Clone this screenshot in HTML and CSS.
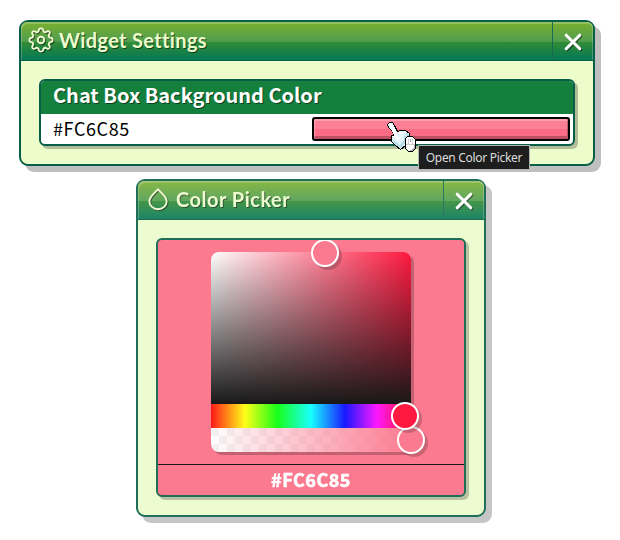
FILE: index.html
```html
<!DOCTYPE html>
<html lang="en">
<head>
<meta charset="utf-8">
<title>Widget Settings</title>
<link rel="stylesheet" href="styles.css">
</head>
<body>
<section class="window settings">
  <header class="titlebar">
    <svg class="title-icon" viewBox="0 0 24 24"><path d="M10.200 2.200C10.800 1 13.200 1 13.800 2.200L14.500 4.300 16 4.900 18 3.900C19.300 3.500 20.500 4.700 20.100 6L19.100 8 19.700 9.500 21.800 10.200C23 10.800 23 13.200 21.800 13.800L19.700 14.500 19.100 16 20.100 18C20.500 19.300 19.300 20.500 18 20.100L16 19.100 14.500 19.700 13.800 21.800C13.200 23 10.800 23 10.200 21.800L9.500 19.700 8 19.100 6 20.100C4.700 20.500 3.500 19.300 3.900 18L4.900 16 4.300 14.500 2.200 13.800C1 13.200 1 10.800 2.200 10.200L4.300 9.500 4.900 8 3.900 6C3.500 4.700 4.700 3.500 6 3.900L8 4.900 9.500 4.300z"/><circle cx="12" cy="12" r="3"/></svg>
    <h1 class="title">Widget Settings</h1>
    <button class="close" aria-label="Close"><svg viewBox="0 0 16 16"><path d="M2 2l12 12M14 2L2 14"/></svg></button>
  </header>
  <div class="window-body">
    <div class="panel field">
      <h2 class="field-title">Chat Box Background Color</h2>
      <div class="field-row"><span class="field-value">#FC6C85</span><button class="swatch" aria-label="Open Color Picker"></button></div>
    </div>
  </div>
</section>

<section class="window picker">
  <header class="titlebar">
    <svg class="title-icon drop" viewBox="0 0 24 24"><path d="M12 3c2 2.400 8 6.500 8 11a8 7.500 0 0 1-16 0c0-4.500 6-8.600 8-11z"/></svg>
    <h1 class="title picker-title">Color Picker</h1>
    <button class="close" aria-label="Close"><svg viewBox="0 0 16 16"><path d="M2 2l12 12M14 2L2 14"/></svg></button>
  </header>
  <div class="window-body">
    <div class="panel picker-panel">
      <div class="picker-area">
        <div class="color-control">
          <div class="saturation"></div>
          <div class="hue"></div>
          <div class="alpha"></div>
          <i class="knob knob-saturation"></i>
          <i class="knob knob-alpha"></i>
          <i class="knob knob-hue"></i>
        </div>
      </div>
      <div class="hex">#FC6C85</div>
    </div>
  </div>
</section>

<div class="tooltip">Open Color Picker</div>
<svg class="cursor" viewBox="0 0 30 32" shape-rendering="crispEdges">
  <path fill="#e4f5fa" stroke="#000" d="M.500 2.500L2.500.500H5.500L7.500 3.500 10.500 9.500 13.500 8.500H18.500L22.500 11.500 23.500 16.500V23.500H18.500L13.500 27.500 8.500 23.500 4.500 19.500V13.500H7.500L4.500 8.500 1.500 5.500z"/>
  <path fill="#b8dce6" d="M19 11h2l2 4v6h-5l-4 5-3-2 3-2 3-4v-4h2zM6 18l3 2 3 2v2H9l-3-4z"/>
  <path fill="#fff" d="M2 2h3l4 7 1 5 3 2-2 3-3-3-1-3-3-7zM12 10h4v2h-4z"/>
  <path fill="#fff" stroke="#000" d="M18.500 16.500L20.500 14.500H25.500L28.500 17.500V26.500L25.500 29.500H21.500L18.500 26.500z"/>
  <path fill="none" stroke="#cfccd2" d="M19 22.500h9M21.500 17v5M25.500 17v5"/>
  <path fill="none" stroke="#aaa4ae" d="M23.500 17v3M27.500 23v3l-2 2h-3"/>
</svg>
</body>
</html>
```
FILE: styles.css
```css
* { box-sizing: border-box; }
body { margin: 0; padding: 20px 0 0 19px; width: 620px; height: 540px; overflow: hidden; background: #fff; font-family: "Noto Sans CJK JP", "Noto Sans", sans-serif; }
h1, h2 { margin: 0; }
button { padding: 0; }
.window { border: 2px solid #065f46; border-radius: 9px; background: #ecfccb; box-shadow: 6px 6px 0 rgba(0,0,0,.25); }
.settings { width: 576px; height: 146px; }
.picker { width: 350px; height: 338px; margin: 13px 0 0 117px; opacity: .9; }
.titlebar { height: 39px; display: flex; align-items: center; padding-left: 7px; border-bottom: 1px solid #065f46; border-radius: 6px 6px 0 0; box-shadow: inset 1px 2px 0 rgba(255,255,255,.22), inset -1px 0 0 rgba(255,255,255,.22); background: linear-gradient(rgba(255,255,255,.14), rgba(255,255,255,.14)) 0 0 / 100% 20px no-repeat, linear-gradient(#65a30d, #047857); }
.title-icon { width: 26px; height: 26px; margin-top: -2px; flex: none; fill: none; stroke: #f1fbd0; stroke-width: 1.7; stroke-linejoin: round; filter: drop-shadow(1px 1px 0 rgba(0,0,0,.5)); }
.drop { width: 26px; height: 26px; }
.title { margin-left: 5px; flex: 1; white-space: nowrap; color: #ecfccb; font: 700 20px/36px Lato, sans-serif; letter-spacing: .35px; padding-bottom: 2px; text-shadow: 1px 1px 0 rgba(0,0,0,.5); }
.picker-title { letter-spacing: .5px; }
.close { width: 41px; height: 38px; display: flex; align-items: center; justify-content: center; border: 0; border-left: 1px solid #166b50; background: none; }
.close svg { width: 18px; height: 18px; margin-top: 1px; fill: none; stroke: #fff; stroke-width: 2.8; stroke-linecap: round; filter: drop-shadow(1px 1px 0 rgba(0,0,0,.5)); }
.window-body { padding: 18px; }
.panel { border: 2px solid #065f46; border-radius: 6px; box-shadow: 3px 3px 0 rgba(0,0,0,.25); }
.field { height: 67px; background: #fff; }
.field-title { height: 33px; padding-left: 12px; border-radius: 4px 4px 0 0; background: #15803d; color: #fff; font-size: 20px; font-weight: 700; line-height: 28px; white-space: nowrap; text-shadow: 1px 1px 0 rgba(0,0,0,.5); }
.field-row { height: 30px; padding: 0 3px 0 12px; display: flex; align-items: center; justify-content: space-between; }
.field-value { padding-bottom: 2px; font-size: 18px; line-height: 28px; letter-spacing: .6px; color: #000; }
.swatch { width: 258px; height: 24px; border: 2px solid #000; border-radius: 3px; background: linear-gradient(rgba(255,255,255,.13), rgba(255,255,255,.13)) 0 0 / 100% 10px no-repeat, #fc6c85; box-shadow: inset 1px 2px 0 rgba(255,255,255,.25), inset -1px -3px 0 rgba(0,0,0,.25); }
.picker-panel { height: 259px; background: #fc6c85; overflow: hidden; }
.picker-area { height: 225px; padding: 12px 53px; border-bottom: 1px solid #000; }
.color-control { position: relative; width: 200px; height: 200px; border-radius: 8px; box-shadow: 3px 3px 0 rgba(0,0,0,.25); }
.saturation { height: 152px; border-radius: 8px 8px 0 0; background: linear-gradient(to top, #000, transparent), linear-gradient(to right, #fff, rgba(255,255,255,0)), #ff002b; }
.hue { height: 24px; background: linear-gradient(to right, #f00, #ff0 17%, #0f0 33%, #0ff 50%, #00f 67%, #f0f 83%, #f00); }
.alpha { height: 24px; border-radius: 0 0 8px 8px; background: linear-gradient(to right, rgba(252,108,133,0), #fc6c85), repeating-conic-gradient(#fff 0 25%, #f2f2f2 0 50%) 0 0 / 16px 16px; }
.knob { position: absolute; width: 28px; height: 28px; border: 2px solid #fff; border-radius: 50%; background: #fc6c85; box-shadow: 3px 3px 0 rgba(0,0,0,.22); }
.knob-saturation { left: 100px; top: -13px; }
.knob-hue { left: 180px; top: 150px; background: #ff002b; }
.knob-alpha { left: 186px; top: 174px; }
.hex { height: 30px; color: #fff; text-align: center; font: 700 18px/28px "Noto Sans CJK JP", sans-serif; letter-spacing: .5px; -webkit-text-stroke: .6px #fff; }
.tooltip { position: absolute; left: 418px; top: 145px; width: 112px; height: 25px; border: 1px solid #b5b5b5; background: #1e1e1e; color: #ddd; text-align: center; font: 12px/23px "Noto Sans", sans-serif; letter-spacing: -.3px; white-space: nowrap; }
.cursor { position: absolute; left: 387px; top: 122px; width: 30px; height: 32px; }
```
